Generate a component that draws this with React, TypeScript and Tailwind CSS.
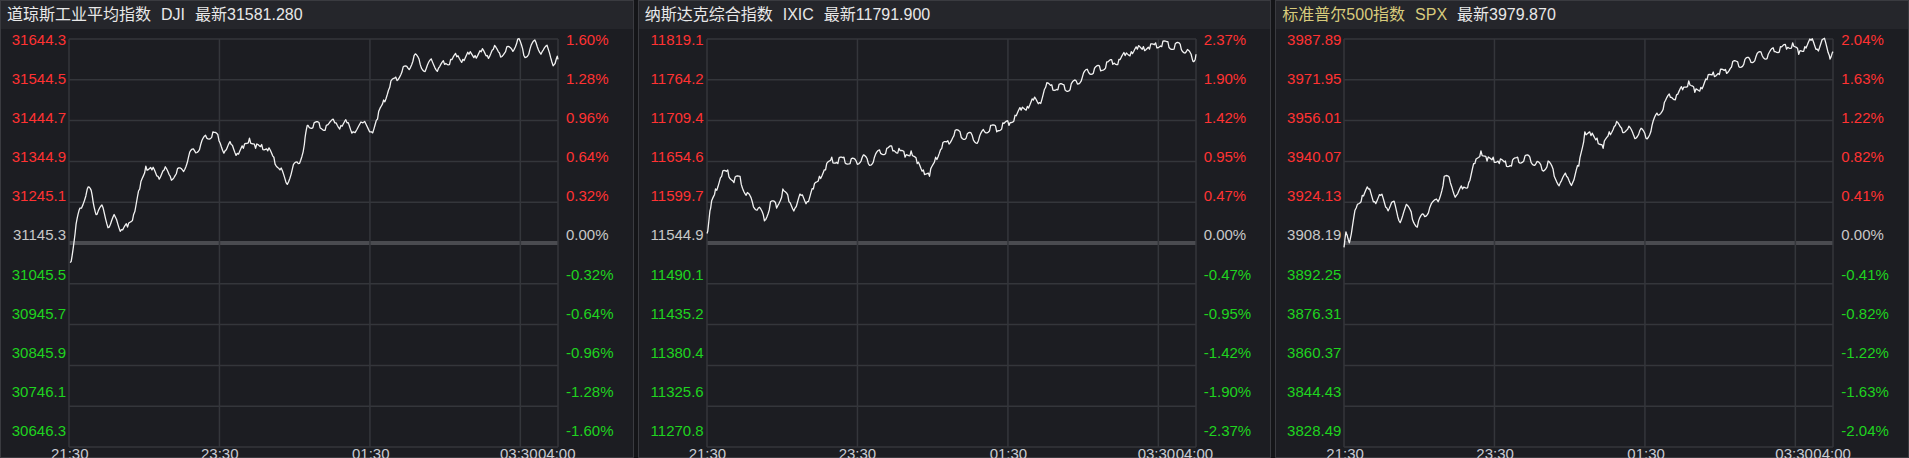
import React from "react";

type P = [number, number];

const dji: P[] = [[58,208],[62,185],[66,165],[72,150],[76,155],[80,170],[85,165],[90,180],[95,172],[100,182],[105,180],[110,170],[115,150],[120,132],[125,135],[130,140],[135,135],[140,140],[145,138],[150,135],[155,125],[160,120],[165,115],[170,110],[175,105],[180,112],[185,120],[190,115],[195,122],[200,118],[205,110],[210,118],[215,115],[220,120],[225,125],[230,135],[235,145],[240,135],[245,130],[250,115],[253,100],[258,98],[263,102],[268,100],[275,98],[280,100],[285,98],[290,105],[298,98],[305,105],[310,95],[315,80],[320,70],[325,62],[330,58],[335,55],[340,45],[345,52],[350,55],[355,50],[360,55],[365,52],[370,48],[375,46],[380,48],[385,44],[390,45],[395,42],[400,45],[405,40],[410,43],[415,42],[420,40],[425,32],[430,45],[435,40],[440,35],[445,42],[450,40],[455,52],[458,48]].map(([x,y])=>[x-57,y-32] as P);
const ixic: P[] = [[583,185],[586,165],[590,150],[595,140],[600,135],[605,145],[610,140],[615,155],[620,160],[625,165],[630,175],[635,160],[640,165],[645,150],[650,160],[655,165],[660,155],[665,160],[670,150],[675,140],[680,135],[685,125],[690,130],[695,125],[700,130],[705,128],[710,125],[715,130],[720,125],[725,122],[730,118],[735,120],[740,118],[745,125],[750,120],[755,130],[760,135],[765,140],[770,125],[775,118],[780,112],[785,108],[790,105],[795,110],[800,108],[805,112],[810,105],[815,100],[820,105],[825,98],[830,100],[835,92],[840,88],[845,85],[850,80],[855,82],[860,70],[865,68],[870,72],[875,68],[880,72],[885,65],[890,62],[895,58],[900,55],[905,57],[910,50],[915,52],[920,48],[925,45],[930,42],[935,40],[940,38],[945,40],[950,35],[955,38],[960,34],[965,40],[970,36],[975,42],[980,48],[983,44]].map(([x,y])=>[(x-583)*401/400,y-32] as P);
const spx: P[] = [[1108,196],[1110,185],[1113,190],[1118,165],[1123,155],[1128,150],[1133,160],[1138,155],[1143,165],[1148,160],[1153,175],[1158,165],[1163,168],[1168,180],[1173,170],[1178,165],[1185,160],[1190,140],[1195,145],[1200,155],[1205,150],[1210,145],[1215,130],[1220,120],[1225,128],[1230,125],[1235,130],[1240,128],[1245,132],[1250,125],[1255,128],[1260,125],[1265,130],[1270,135],[1275,128],[1280,140],[1285,145],[1290,140],[1295,145],[1300,132],[1305,105],[1310,108],[1315,110],[1320,118],[1325,105],[1330,100],[1335,102],[1340,103],[1345,108],[1350,104],[1355,110],[1360,100],[1365,92],[1370,82],[1375,78],[1380,76],[1385,72],[1390,65],[1395,74],[1400,70],[1405,64],[1410,58],[1415,60],[1420,56],[1425,54],[1430,50],[1435,52],[1440,48],[1445,46],[1450,45],[1455,44],[1460,42],[1465,38],[1470,40],[1475,35],[1480,44],[1485,38],[1490,33],[1495,40],[1500,32],[1505,45],[1508,42]].map(([x,y])=>[(x-1108)*401/400,y-32] as P);

function densify(pts: P[], seed: number): string {
  const out: P[] = [];
  for (let i = 0; i < pts.length - 1; i++) {
    const [x0, y0] = pts[i];
    const [x1, y1] = pts[i + 1];
    const n = 5;
    for (let k = 0; k < n; k++) {
      const t = k / n;
      const j = k === 0 ? 0 : Math.sin((i * 7 + k) * 12.9898 + seed) * 3.5;
      out.push([x0 + (x1 - x0) * t, y0 + (y1 - y0) * t + j]);
    }
  }
  out.push(pts[pts.length - 1]);
  return out.map(([x, y], i) => `${i ? "L" : "M"}${x.toFixed(1)},${y.toFixed(1)}`).join(" ");
}

type Cfg = {
  name: string; code: string; last: string; yellow?: boolean;
  left: string[]; right: string[]; pts: P[]; seed: number;
};

const charts: Cfg[] = [
  { name: "道琼斯工业平均指数", code: "DJI", last: "最新31581.280",
    left: ["31644.3","31544.5","31444.7","31344.9","31245.1","31145.3","31045.5","30945.7","30845.9","30746.1","30646.3"],
    right: ["1.60%","1.28%","0.96%","0.64%","0.32%","0.00%","-0.32%","-0.64%","-0.96%","-1.28%","-1.60%"], pts: dji, seed: 1 },
  { name: "纳斯达克综合指数", code: "IXIC", last: "最新11791.900",
    left: ["11819.1","11764.2","11709.4","11654.6","11599.7","11544.9","11490.1","11435.2","11380.4","11325.6","11270.8"],
    right: ["2.37%","1.90%","1.42%","0.95%","0.47%","0.00%","-0.47%","-0.95%","-1.42%","-1.90%","-2.37%"], pts: ixic, seed: 2 },
  { name: "标准普尔500指数", code: "SPX", last: "最新3979.870", yellow: true,
    left: ["3987.89","3971.95","3956.01","3940.07","3924.13","3908.19","3892.25","3876.31","3860.37","3844.43","3828.49"],
    right: ["2.04%","1.63%","1.22%","0.82%","0.41%","0.00%","-0.41%","-0.82%","-1.22%","-1.63%","-2.04%"], pts: spx, seed: 3 },
];

const color = (i: number) => (i < 5 ? "text-[#ff3232]" : i === 5 ? "text-[#c8c8c8]" : "text-[#1fd31f]");

function Panel({ c }: { c: Cfg }) {
  const vx = [0.3077, 0.6154, 0.923];
  return (
    <div className="flex-1 flex flex-col bg-[#1c1d22] border border-[#3a3b40]">
      <div className="h-[28px] bg-[#25262b] flex items-center px-[6px] text-[16px] gap-[10px] whitespace-nowrap">
        <span className={c.yellow ? "text-[#d8cb7c]" : "text-[#e8e8e8]"}>{c.name}</span>
        <span className={c.yellow ? "text-[#d8cb7c]" : "text-[#e8e8e8]"}>{c.code}</span>
        <span className="text-[#e8e8e8]">{c.last}</span>
      </div>
      <div className="flex pt-[10px] h-[418px] shrink-0">
        <div className="w-[68px] h-[408px] flex flex-col justify-between pr-[3px] -my-[8px]">
          {c.left.map((t, i) => (
            <div key={i} className={`h-[17px] leading-[17px] text-right text-[15px] ${color(i)}`}>{t}</div>
          ))}
        </div>
        <div className="w-[489px] h-[408px] relative shrink-0">
          <svg className="absolute inset-0 w-full h-full overflow-visible" viewBox="0 0 401 321" preserveAspectRatio="none">
            {Array.from({ length: 11 }).map((_, i) => (
              <line key={i} x1={0} x2={401} y1={i * 32.1} y2={i * 32.1} stroke={i === 5 ? "#4a4b50" : "#34363b"} strokeWidth={i === 5 ? 4 : 1.5} vectorEffect="non-scaling-stroke" />
            ))}
            <line x1={0} x2={0} y1={0} y2={321} stroke="#34363b" strokeWidth={1.5} vectorEffect="non-scaling-stroke" />
            <line x1={401} x2={401} y1={0} y2={321} stroke="#34363b" strokeWidth={1.5} vectorEffect="non-scaling-stroke" />
            {vx.map((f, i) => (
              <line key={i} x1={f * 401} x2={f * 401} y1={0} y2={321} stroke="#34363b" strokeWidth={1.5} vectorEffect="non-scaling-stroke" />
            ))}
            <path d={densify(c.pts, c.seed)} fill="none" stroke="#f2f2f2" strokeWidth={1.3} vectorEffect="non-scaling-stroke" strokeLinejoin="round" />
          </svg>
        </div>
        <div className="flex-1 h-[408px] flex flex-col justify-between pl-[8px] -my-[8px]">
          {c.right.map((t, i) => (
            <div key={i} className={`h-[17px] leading-[17px] text-[15px] ${color(i)}`}>{t}</div>
          ))}
        </div>
      </div>
      <div className="relative flex-1 text-[15px] text-[#c8ccd4]">
        <span className="absolute left-[50px] top-[-4px]">21:30</span>
        <span className="absolute left-[200px] top-[-4px]">23:30</span>
        <span className="absolute left-[351px] top-[-4px]">01:30</span>
        <span className="absolute left-[499px] top-[-4px]">03:30</span>
        <span className="absolute left-[537px] top-[-4px]">04:00</span>
      </div>
    </div>
  );
}

export default function App() {
  return (
    <div className="w-[1909px] h-[458px] bg-[#141518] flex gap-[4px] overflow-hidden" style={{ fontFamily: '"Liberation Sans", "Noto Sans CJK SC", sans-serif' }}>
      {charts.map((c) => <Panel key={c.code} c={c} />)}
    </div>
  );
}
